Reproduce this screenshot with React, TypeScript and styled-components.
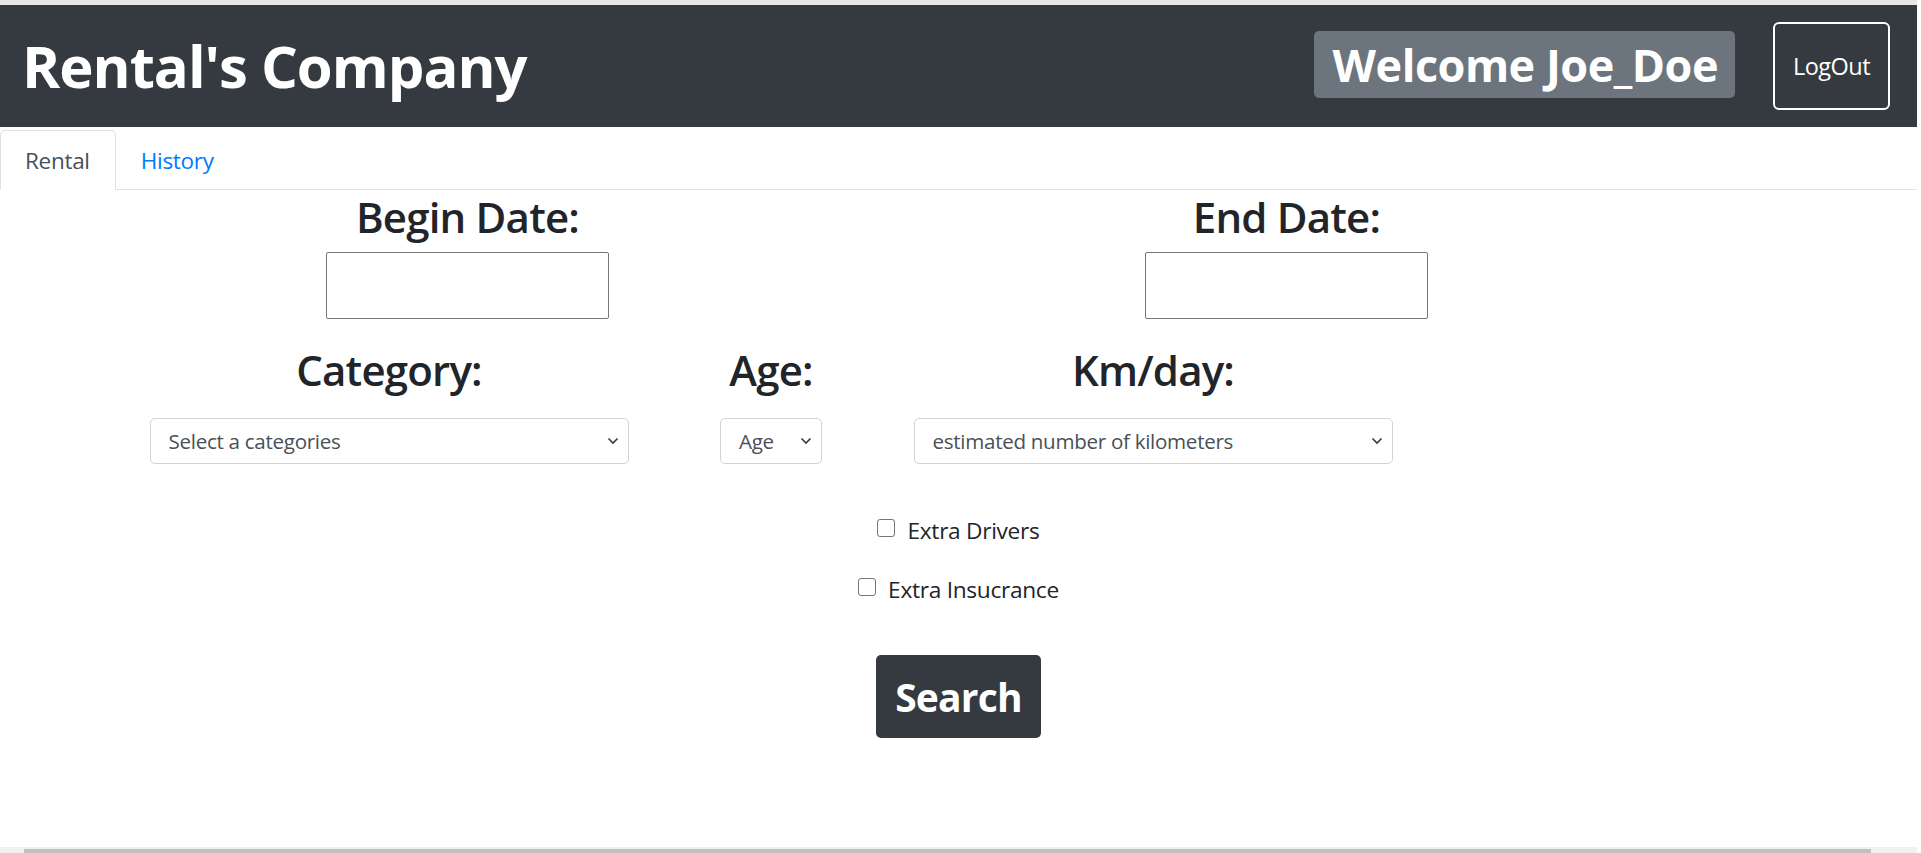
import React from "react";
import styled, { createGlobalStyle } from "styled-components";

const GlobalStyle = createGlobalStyle`
  html, body {
    margin: 0;
    padding: 0;
    background: #ffffff;
    overflow: hidden;
  }
  body {
    font-family: "Open Sans", "Noto Sans", "Liberation Sans", sans-serif;
    color: #212529;
  }
  * { box-sizing: border-box; }
`;

const Page = styled.div`
  width: 1917px;
  height: 853px;
  border-top: 5px solid #e6e6e6;
  position: relative;
`;

const Navbar = styled.header`
  height: 122px;
  background: #343a40;
  display: flex;
  align-items: center;
  justify-content: space-between;
  padding: 0 27px 0 22px;
`;

const Brand = styled.h1`
  margin: 0;
  color: #ffffff;
  font-weight: 700;
  font-size: 58px;
  letter-spacing: -1px;
  line-height: 1;
`;

const RightGroup = styled.div`
  display: flex;
  align-items: center;
  gap: 38px;
`;

const WelcomeBadge = styled.div`
  height: 67px;
  display: flex;
  align-items: center;
  padding: 0 17px 0 19px;
  margin-top: -3px;
  background: #6c757d;
  border-radius: 5px;
  color: #ffffff;
  font-weight: 700;
  font-size: 45px;
  letter-spacing: -0.5px;
`;

const LogOutButton = styled.button`
  width: 117px;
  height: 88px;
  border: 2px solid #ffffff;
  border-radius: 6px;
  background: transparent;
  color: #ffffff;
  font-family: inherit;
  font-size: 23.5px;
  letter-spacing: -0.5px;
  cursor: pointer;
  padding: 0;
`;

const TabBar = styled.nav`
  display: flex;
  padding-top: 3px;
  border-bottom: 1px solid #dee2e6;
`;

const Tab = styled.a<{ $active?: boolean }>`
  height: 60px;
  display: flex;
  align-items: center;
  padding: 0 25px 0 24px;
  margin-bottom: -1px;
  font-size: 22.5px;
  letter-spacing: -0.3px;
  text-decoration: none;
  color: ${(p) => (p.$active ? "#495057" : "#007bff")};
  background: ${(p) => (p.$active ? "#ffffff" : "transparent")};
  border: 1px solid ${(p) => (p.$active ? "#dee2e6" : "transparent")};
  border-bottom-color: ${(p) => (p.$active ? "#ffffff" : "transparent")};
  border-radius: 5px 5px 0 0;
`;

const Form = styled.main`
  display: flex;
  flex-direction: column;
`;

const DateRow = styled.div`
  display: grid;
  grid-template-columns: 819px 819px;
  padding-left: 58px;
`;

const OptionRow = styled.div`
  display: grid;
  grid-template-columns: 382px 382px 382px;
  padding-left: 198px;
  margin-top: 24px;
`;

const Field = styled.div`
  display: flex;
  flex-direction: column;
  align-items: center;
`;

const Label = styled.label`
  font-size: 42px;
  font-weight: 600;
  line-height: 1.3;
  letter-spacing: -0.8px;
  color: #212529;
  white-space: nowrap;
`;

const DateInput = styled.input`
  margin-top: 7px;
  width: 283px;
  height: 67px;
  border: 1px solid #767676;
  border-radius: 2px;
  background: #ffffff;
`;

const SelectBox = styled.div<{ $width: number }>`
  margin-top: 21px;
  width: ${(p) => p.$width}px;
  flex-shrink: 0;
  height: 46px;
  border: 1px solid #ced4da;
  border-radius: 5px;
  display: flex;
  align-items: center;
  justify-content: space-between;
  padding: 0 9px 0 18px;
  font-size: 20.6px;
  letter-spacing: -0.3px;
  color: #495057;
  background: #ffffff;
  white-space: nowrap;
`;

const Chevron = () => (
  <svg width="12" height="8" viewBox="0 0 12 8" fill="none">
    <path d="M1.5 1.5 L6 6 L10.5 1.5" stroke="#343a40" strokeWidth="1.6" />
  </svg>
);

const CheckList = styled.div`
  display: flex;
  flex-direction: column;
  align-items: center;
  gap: 28px;
  margin-top: 51px;
`;

const CheckItem = styled.label`
  display: flex;
  align-items: center;
  gap: 12px;
  font-size: 22.7px;
  letter-spacing: -0.3px;
  color: #212529;
`;

const CheckBox = styled.span`
  width: 18px;
  height: 18px;
  border: 1px solid #767676;
  border-radius: 3px;
  background: #fff;
  margin-top: -5px;
`;

const SearchButton = styled.button`
  align-self: center;
  margin-top: 50px;
  width: 165px;
  height: 83px;
  border: none;
  border-radius: 5px;
  background: #343a40;
  color: #ffffff;
  font-family: inherit;
  font-weight: 700;
  font-size: 39px;
  letter-spacing: -0.8px;
  cursor: pointer;
  padding: 0;
`;

const ScrollTrack = styled.div`
  position: absolute;
  left: 0;
  right: 0;
  bottom: 0;
  height: 6px;
  background: #f1f1f1;
  padding: 2px 46px 0 24px;
`;

const ScrollThumb = styled.div`
  height: 4px;
  background: #c1c1c1;
`;

export default function App() {
  return (
    <>
      <GlobalStyle />
      <Page>
        <Navbar>
          <Brand>Rental's Company</Brand>
          <RightGroup>
            <WelcomeBadge>Welcome Joe_Doe</WelcomeBadge>
            <LogOutButton>LogOut</LogOutButton>
          </RightGroup>
        </Navbar>
        <TabBar>
          <Tab $active>Rental</Tab>
          <Tab>History</Tab>
        </TabBar>
        <Form>
          <DateRow>
            <Field>
              <Label>Begin Date:</Label>
              <DateInput />
            </Field>
            <Field>
              <Label>End Date:</Label>
              <DateInput />
            </Field>
          </DateRow>
          <OptionRow>
            <Field>
              <Label>Category:</Label>
              <SelectBox $width={479}>
                Select a categories
                <Chevron />
              </SelectBox>
            </Field>
            <Field>
              <Label>Age:</Label>
              <SelectBox $width={102}>
                Age
                <Chevron />
              </SelectBox>
            </Field>
            <Field>
              <Label>Km/day:</Label>
              <SelectBox $width={479}>
                estimated number of kilometers
                <Chevron />
              </SelectBox>
            </Field>
          </OptionRow>
          <CheckList>
            <CheckItem>
              <CheckBox />
              Extra Drivers
            </CheckItem>
            <CheckItem>
              <CheckBox />
              Extra Insucrance
            </CheckItem>
          </CheckList>
          <SearchButton>Search</SearchButton>
        </Form>
        <ScrollTrack>
          <ScrollThumb />
        </ScrollTrack>
      </Page>
    </>
  );
}
